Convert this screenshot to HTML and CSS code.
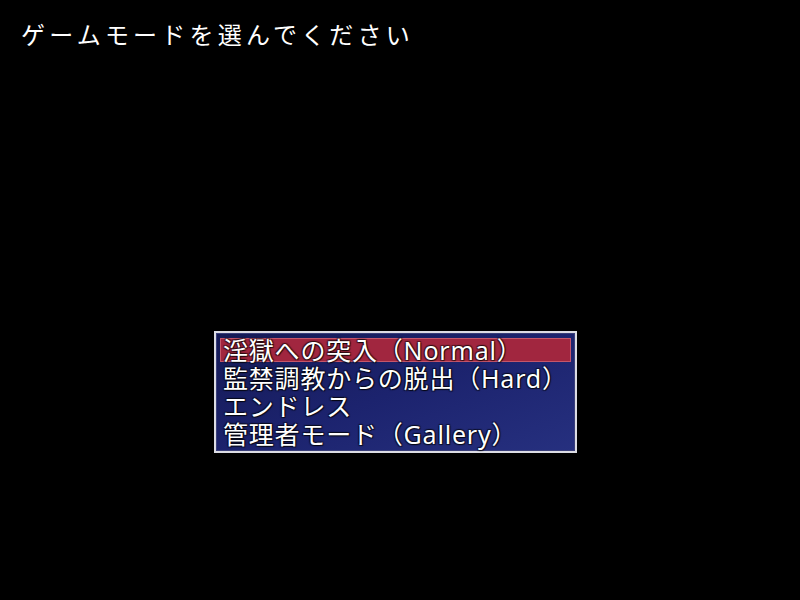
FILE: index.html
```html
<!DOCTYPE html>
<html lang="ja">
<head>
<meta charset="utf-8">
<title>ゲームモード</title>
<link rel="stylesheet" href="styles.css">
</head>
<body>
<div class="screen">
  <div class="title">ゲームモードを選んでください</div>
  <div class="window">
    <div class="item selected">淫獄への突入（Normal）</div>
    <div class="item">監禁調教からの脱出（Hard）</div>
    <div class="item">エンドレス</div>
    <div class="item">管理者モード（Gallery）</div>
  </div>
</div>
</body>
</html>
```

FILE: styles.css
```css
html, body {
  margin: 0;
  padding: 0;
  background: #000;
}
.screen {
  width: 800px;
  height: 600px;
  background: #000;
  overflow: hidden;
  color: #fff;
  font-family: "Noto Sans", "Noto Sans CJK JP", sans-serif;
}
.title {
  padding: 18px 0 0 21px;
  height: 32px;
  font-size: 24px;
  line-height: 32px;
  letter-spacing: 4.2px;
  font-weight: 400;
  font-family: "Noto Sans CJK JP", sans-serif;
}
.window {
  margin: 281px 0 0 214px;
  width: 363px;
  height: 122px;
  box-sizing: border-box;
  border: 2px solid #dcdce4;
  padding: 5px 4px;
  background: linear-gradient(160deg, #151a55 0%, #1c236e 50%, #26307f 100%);
  box-shadow: inset 0 0 0 1px #3a3f7a;
}
.item {
  height: 24px;
  line-height: 24px;
  margin-bottom: 4px;
  padding-left: 3px;
  font-size: 25px;
  letter-spacing: 0.8px;
  white-space: nowrap;
  text-shadow: 1px 1px 1px rgba(0,0,0,0.7), -1px -1px 1px rgba(0,0,0,0.5), 1px -1px 1px rgba(0,0,0,0.5), -1px 1px 1px rgba(0,0,0,0.5);
}
.item.selected {
  background: #a1263f;
  box-shadow: inset 0 0 0 1px #c4566a;
}
```
